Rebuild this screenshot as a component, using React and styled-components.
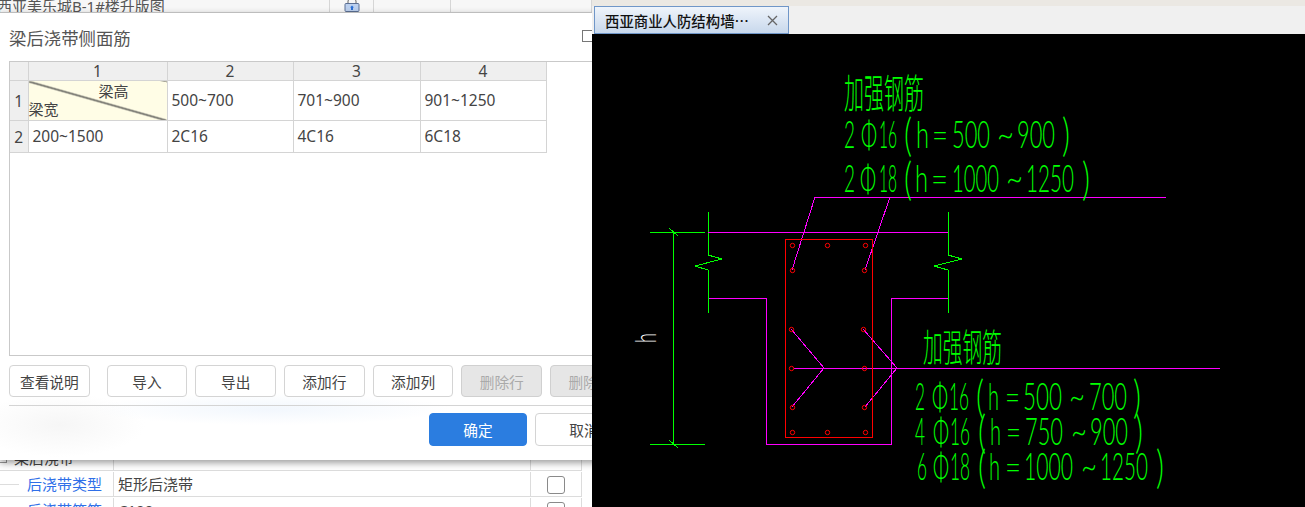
import React from "react";
import styled, { createGlobalStyle } from "styled-components";

const GlobalStyle = createGlobalStyle`
  html, body { margin: 0; padding: 0; background: #fff; overflow: hidden; }
  body { font-family: "Noto Sans", "Noto Sans CJK SC", sans-serif; color: #333; }
`;

const Page = styled.div`
  display: flex;
  width: 1305px;
  height: 507px;
  overflow: hidden;
`;

/* left side: dialog over the property table */
const LeftPane = styled.div`
  width: 592px;
  flex: none;
  overflow: hidden;
  background: #fff;
`;
const BackRow = styled.div`
  display: grid;
  grid-template-columns: 114px 417px 51px;
  height: 26px;
  border-bottom: 1px solid #dcdcdc;
  box-sizing: border-box;
  padding-top: 1px;
  font-size: 15px;
  line-height: 25px;
  width: 582px;
  margin-top: ${(p) => p.$pull || 0}px;
`;
const TopRow = styled.div`
  display: grid;
  grid-template-columns: 330px 44px 77px 1fr;
  height: 12px;
  overflow: hidden;
  font-size: 15px;
  line-height: 12px;
  color: #555;
  background: #f7f7f7;
`;
const TopCell = styled.div`
  border-right: 1px solid #d6d6d6;
  display: flex;
  justify-content: center;
  white-space: nowrap;
  &:first-child { justify-content: flex-start; margin-left: -3px; }
`;
const Cell = styled.div`
  display: flex;
  align-items: center;
  gap: 8px;
  padding-left: ${(p) => p.$pad || 0}px;
  border-right: 1px solid #dcdcdc;
  color: ${(p) => p.$color || "#444"};
  white-space: nowrap;
  justify-content: ${(p) => (p.$center ? "center" : "flex-start")};
`;
const BlueLabel = styled.span`
  color: #2f6fe8;
`;
const TreeLine = styled.span`
  width: 19px;
  height: 1px;
  background: #ddd;
  flex: none;
`;
const ExpandBox = styled.span`
  width: 7px;
  height: 7px;
  margin-left: -2px;
  margin-right: -1px;
  border: 1px solid #999;
  flex: none;
`;
const CheckBox = styled.span`
  width: 16px;
  height: 16px;
  border: 1px solid #8a8a8a;
  border-radius: 3px;
  background: #fff;
  display: block;
`;

const Dialog = styled.div`
  position: relative;
  z-index: 2;
  height: 448px;
  width: 640px;
  box-sizing: border-box;
  padding: 0 0 0 9px;
  border-top: 1px solid #bdbdbd;
  box-shadow: 0 3px 7px rgba(0, 0, 0, 0.38);
  background: radial-gradient(ellipse 180px 16px at 270px 396px, #f2f7fd, rgba(242, 247, 253, 0)),
    radial-gradient(ellipse 85px 32px at 60px 412px, #f6f6f6, rgba(246, 246, 246, 0)),
    #fff;
`;
const TitleBar = styled.div`
  height: 48px;
  display: flex;
  align-items: center;
  font-size: 17.4px;
  color: #555;
  position: relative;
`;
const RestoreBox = styled.span`
  position: absolute;
  left: 573px;
  top: 17px;
  width: 10px;
  height: 10px;
  border: 1px solid #777;
`;
const GridFrame = styled.div`
  height: 295px;
  border: 1px solid #c9c9c9;
  border-right: none;
  box-sizing: border-box;
`;
const Sheet = styled.table`
  border-collapse: collapse;
  table-layout: fixed;
  width: 536px;
  font-size: 15.5px;
  color: #444;
`;
const HeadCell = styled.th`
  height: 18px;
  padding: 0;
  background: #efefef;
  border: 1px solid #d4d4d4;
  border-top: none;
  font-weight: 400;
  text-align: center;
  line-height: 18px;
  &:first-child { border-left: none; }
`;
const RowHead = styled.th`
  padding: 0;
  background: #efefef;
  border: 1px solid #d4d4d4;
  border-left: none;
  font-weight: 400;
  text-align: center;
`;
const DataCell = styled.td`
  height: ${(p) => p.$h}px;
  padding: 0 0 2px 4px;
  border: 1px solid #d4d4d4;
  box-sizing: border-box;
  white-space: nowrap;
`;
const CornerCell = styled.td`
  padding: 0;
  height: 39px;
  border: 1px solid #d4d4d4;
  background: linear-gradient(
      to top right,
      rgba(60, 60, 60, 0) calc(50% - 1.3px),
      #3c3c3c 50%,
      rgba(60, 60, 60, 0) calc(50% + 1.3px)
    ),
    #fffde6;
`;
const CornerLabels = styled.div`
  display: flex;
  flex-direction: column;
  font-size: 15px;
  line-height: 17px;
`;
const CornerTop = styled.span`
  align-self: flex-end;
  padding-right: 38px;
`;
const CornerBottom = styled.span`
  margin-top: 1px;
`;
const ButtonRow = styled.div`
  display: flex;
  gap: 8px;
  margin-top: 9px;
  height: 32px;
`;
const ToolButton = styled.button`
  width: 80.7px;
  height: 32px;
  flex: none;
  padding: 0;
  margin-right: ${(p) => p.$gapAfter || 0}px;
  box-sizing: border-box;
  border: 1px solid ${(p) => (p.disabled ? "#d0d0d0" : "#d4d4d4")};
  border-radius: 4px;
  background: ${(p) => (p.disabled ? "#e6e6e6" : "#fff")};
  color: ${(p) => (p.disabled ? "#aaa" : "#444")};
  font: 400 14.7px "Noto Sans CJK SC", sans-serif;
`;
const Divider = styled.div`
  width: 583px;
  height: 1px;
  background: #d4d4d4;
  margin-top: 8px;
`;
const FooterRow = styled.div`
  display: flex;
  gap: 8px;
  margin: 7px 0 0 420px;
`;
const FootButton = styled.button`
  width: 98px;
  height: 33px;
  flex: none;
  padding: 0;
  border: 1px solid ${(p) => (p.$primary ? "#2b7de0" : "#d4d4d4")};
  border-radius: 4px;
  background: ${(p) => (p.$primary ? "#2b7de0" : "#fff")};
  color: ${(p) => (p.$primary ? "#fff" : "#444")};
  font: 400 14.7px "Noto Sans CJK SC", sans-serif;
`;

/* right side: drawing preview */
const RightPane = styled.div`
  flex: 1;
  display: flex;
  flex-direction: column;
  min-width: 0;
`;
const TopStrip = styled.div`
  height: 6px;
  background: #ebe8e3;
`;
const TabBar = styled.div`
  height: 28px;
  background: #f0f0f0;
  padding-left: 2px;
  box-sizing: border-box;
`;
const Tab = styled.div`
  width: 195px;
  height: 28px;
  box-sizing: border-box;
  display: flex;
  align-items: center;
  padding: 0 10px;
  justify-content: space-between;
  border: 1px solid #6f96c8;
  background: linear-gradient(#eff4fb, #c8d8ec);
  color: #111;
  font: 500 14.4px "Noto Sans CJK SC", sans-serif;
  white-space: nowrap;
`;
const CloseIcon = styled.svg`
  width: 11px;
  height: 11px;
  flex: none;
`;
const Canvas = styled.div`
  flex: 1;
  background: #000;
  overflow: hidden;
`;
const Drawing = styled.svg`
  display: block;
  shape-rendering: crispEdges;
`;
const CadText = styled.text`
  font-family: "Lato", "Inter", "Noto Sans", sans-serif;
  font-weight: 300;
  fill: ${(p) => p.$ink || "#00ff00"};
  shape-rendering: auto;
`;
const CadHan = styled(CadText)`
  font-family: "Noto Sans CJK SC", sans-serif;
`;
const Rebar = styled.circle`
  fill: none;
  stroke: #ff0000;
  shape-rendering: auto;
`;

const GREEN = "#00ff00";
const PINK = "#ff00ff";
const RED = "#ff0000";

const greenLines = [
  "650,232 705,232",
  "650,444 705,444",
  "673,232 673,444",
  "669,228 678,236",
  "669,440 678,448",
  "708,212 708,255 722,259 695,266 708,270 708,313",
  "948,212 948,255 962,259 934,266 948,270 948,313",
];
const pinkLines = [
  "1166,197 815,197 792,270",
  "890,197 865,270",
  "708,232 948,232",
  "709,298 766,298 766,444 891,444 891,298 948,298",
  "791,329 824,368 792,407",
  "863,329 897,368 865,407",
  "794,368 1220,368",
];
const rebars = [
  [792, 245], [827, 245], [865, 245],
  [792, 270], [864, 270],
  [791, 329], [863, 329],
  [791, 368], [864, 368],
  [792, 407], [864, 407],
  [792, 432], [827, 432], [865, 432],
];

// text, x, width: each run is fitted to the width it has in the drawing
const noteLines = [
  { y: 148, runs: [["2", 844, 11], ["Φ", 861, 16], ["16", 879, 18], ["(", 904, 8, 1], ["h", 916, 13], ["=", 932, 16], ["500", 952, 38], ["~", 997, 17], ["900", 1017, 38], [")", 1062, 8, 1]] },
  { y: 192, runs: [["2", 844, 11], ["Φ", 860, 16], ["18", 879, 18], ["(", 904, 8, 1], ["h", 915, 13], ["=", 931, 17], ["1000", 952, 47], ["~", 1006, 17], ["1250", 1026, 48], [")", 1082, 8, 1]] },
  { y: 410, runs: [["2", 915, 10], ["Φ", 932, 16], ["16", 949, 20], ["(", 976, 8, 1], ["h", 988, 11], ["=", 1005, 15], ["500", 1023, 39], ["~", 1069, 16], ["700", 1089, 38], [")", 1133, 8, 1]] },
  { y: 445, runs: [["4", 915, 10], ["Φ", 933, 16], ["16", 950, 20], ["(", 978, 8, 1], ["h", 990, 11], ["=", 1006, 15], ["750", 1025, 38], ["~", 1071, 16], ["900", 1090, 38], [")", 1135, 8, 1]] },
  { y: 480, runs: [["6", 917, 10], ["Φ", 933, 16], ["18", 950, 20], ["(", 978, 8, 1], ["h", 989, 11], ["=", 1005, 16], ["1000", 1024, 49], ["~", 1081, 16], ["1250", 1100, 48], [")", 1156, 8, 1]] },
];

function CadDrawing() {
  return (
    <Drawing width="713" height="473" viewBox="592 34 713 473">
      {greenLines.map((p) => (
        <polyline key={p} points={p} fill="none" stroke={GREEN} strokeWidth="1" />
      ))}
      {pinkLines.map((p) => (
        <polyline key={p} points={p} fill="none" stroke={PINK} strokeWidth="1" />
      ))}
      <rect x="785.5" y="239.5" width="87" height="198" fill="none" stroke={RED} />
      {rebars.map(([x, y]) => (
        <Rebar key={x + "-" + y} cx={x + 0.5} cy={y + 0.5} r="2.2" />
      ))}
      <CadText $ink="#ffffff" x="0" y="0" fontSize="30" transform="translate(656 343) rotate(-90) scale(.6 1)">
        h
      </CadText>
      <CadHan x="844" y="108" fontSize="40" textLength="80" lengthAdjust="spacingAndGlyphs">加强钢筋</CadHan>
      <CadHan x="923" y="361" fontSize="38" textLength="79" lengthAdjust="spacingAndGlyphs">加强钢筋</CadHan>
      {noteLines.map((line) =>
        line.runs.map(([t, x, w, tall]) => (
          <CadText
            key={line.y + t + x}
            x={x}
            y={tall ? line.y + 3 : line.y}
            fontSize={tall ? 46 : 38}
            textLength={w}
            lengthAdjust="spacingAndGlyphs"
          >
            {t}
          </CadText>
        ))
      )}
    </Drawing>
  );
}

export default function App() {
  return (
    <Page>
      <GlobalStyle />
      <LeftPane>
        <TopRow>
          <TopCell>西亚美乐城B-1#楼升版图</TopCell>
          <TopCell>
            <svg width="16" height="12" viewBox="0 0 16 12">
              <path d="M4 4V1a4 3 0 0 1 8 0V4" fill="none" stroke="#666" />
              <rect x="1" y="3.5" width="14" height="8" rx="1" fill="#bcd0ee" stroke="#5b6f93" />
              <path d="M8 5.5l2 2H9V10H7V7.500H6z" fill="#2c70d5" />
            </svg>
          </TopCell>
          <TopCell />
          <TopCell />
        </TopRow>
        <Dialog>
          <TitleBar>
            梁后浇带侧面筋
            <RestoreBox />
          </TitleBar>
          <GridFrame>
            <Sheet>
              <colgroup>
                <col width="18" />
                <col width="139" />
                <col width="126" />
                <col width="127" />
                <col width="126" />
              </colgroup>
              <thead>
                <tr>
                  <HeadCell />
                  <HeadCell>1</HeadCell>
                  <HeadCell>2</HeadCell>
                  <HeadCell>3</HeadCell>
                  <HeadCell>4</HeadCell>
                </tr>
              </thead>
              <tbody>
                <tr>
                  <RowHead>1</RowHead>
                  <CornerCell>
                    <CornerLabels>
                      <CornerTop>梁高</CornerTop>
                      <CornerBottom>梁宽</CornerBottom>
                    </CornerLabels>
                  </CornerCell>
                  <DataCell $h={39}>500~700</DataCell>
                  <DataCell $h={39}>701~900</DataCell>
                  <DataCell $h={39}>901~1250</DataCell>
                </tr>
                <tr>
                  <RowHead>2</RowHead>
                  <DataCell $h={32}>200~1500</DataCell>
                  <DataCell $h={32}>2C16</DataCell>
                  <DataCell $h={32}>4C16</DataCell>
                  <DataCell $h={32}>6C18</DataCell>
                </tr>
              </tbody>
            </Sheet>
          </GridFrame>
          <ButtonRow>
            <ToolButton $gapAfter={9}>查看说明</ToolButton>
            <ToolButton>导入</ToolButton>
            <ToolButton>导出</ToolButton>
            <ToolButton>添加行</ToolButton>
            <ToolButton>添加列</ToolButton>
            <ToolButton disabled>删除行</ToolButton>
            <ToolButton disabled>删除列</ToolButton>
          </ButtonRow>
          <Divider />
          <FooterRow>
            <FootButton $primary>确定</FootButton>
            <FootButton>取消</FootButton>
          </FooterRow>
        </Dialog>
        <BackRow $pull={-15}>
          <Cell>
            <ExpandBox />
            梁后浇带
          </Cell>
          <Cell />
          <Cell />
        </BackRow>
        <BackRow>
          <Cell>
            <TreeLine />
            <BlueLabel>后浇带类型</BlueLabel>
          </Cell>
          <Cell $pad={4}>矩形后浇带</Cell>
          <Cell $center><CheckBox /></Cell>
        </BackRow>
        <BackRow>
          <Cell>
            <TreeLine />
            <BlueLabel>后浇带箍筋</BlueLabel>
          </Cell>
          <Cell $pad={4}>C100</Cell>
          <Cell $center><CheckBox /></Cell>
        </BackRow>
      </LeftPane>
      <RightPane>
        <TopStrip />
        <TabBar>
          <Tab>
            西亚商业人防结构墙⋯
            <CloseIcon viewBox="0 0 11 11">
              <path d="M1 1l9 9M10 1l-9 9" stroke="#666" strokeWidth="1.3" fill="none" />
            </CloseIcon>
          </Tab>
        </TabBar>
        <Canvas>
          <CadDrawing />
        </Canvas>
      </RightPane>
    </Page>
  );
}
